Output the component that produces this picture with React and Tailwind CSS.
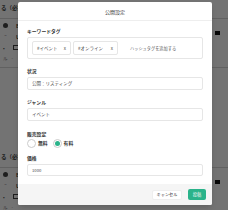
import React from "react";

function BgBlock() {
  return (
    <div className="h-[149px] flex flex-col text-[#444]">
      <div className="h-[19px] flex items-center pl-[1px] border-b border-[#d8d8d8] text-[5.5px] font-bold leading-none">
        る（必須）
      </div>
      <div className="flex">
        <div className="w-[30px] flex flex-col gap-[2px] pt-[2px] pl-[3px]">
          <div className="h-[9px] flex items-center gap-[8px] text-[5px] font-bold leading-none"><span className="w-[5px] h-[5px] rounded-full bg-[#444] inline-block" /><span>B</span></div>
          <div className="h-[9px] flex items-center gap-[8px] text-[5px] font-bold leading-none"><span>ˉ</span><span>U</span><span>S</span></div>
          <div className="h-[9px] flex items-center gap-[8px] text-[5px] leading-none"><span>•</span><span className="w-[6px] h-[5px] border border-[#444] inline-block" /></div>
          <div className="h-[9px] flex items-center gap-[4px] text-[4.5px] text-[#777] leading-none"><span>ル</span><span>-</span></div>
        </div>
        <div className="flex-1 flex justify-end pt-[12px] pr-[8px]">
          <span className="w-[5px] h-[4px] bg-[#111] inline-block" />
        </div>
      </div>
      <div className="border-b border-[#d8d8d8] mt-[4px]" />
    </div>
  );
}

export default function App() {
  return (
    <div className="relative w-[228px] h-[210px] overflow-hidden bg-white" style={{ fontFamily: '"Noto Sans CJK JP", "Noto Sans", sans-serif' }}>
      <div className="flex flex-col">
        <BgBlock />
        <BgBlock />
      </div>
      <div className="absolute inset-0 bg-black/55" />
      <div className="absolute left-[18px] top-[2px] w-[194px] h-[203px] bg-white rounded-[2px] flex flex-col shadow-md">
        <div className="h-[19px] shrink-0 flex items-center justify-center border-b border-[#eee] text-[5px] leading-none text-[#333]">
          公開設定
        </div>
        <div className="px-[9px] flex flex-col text-[#333]">
          <div className="mt-[8px] h-[5px] flex items-center text-[4.8px] leading-none font-bold">キーワードタグ</div>
          <div className="mt-[3px] h-[22px] border border-[#e6e6e6] rounded-[2px] flex items-center pl-[4px] gap-[2px]">
            <div className="h-[14px] w-[39px] border border-[#e6e6e6] rounded-[2px] flex items-center justify-between px-[4px] text-[4.5px] leading-none text-[#444]">
              <span>#イベント</span><span>x</span>
            </div>
            <div className="h-[14px] w-[45px] border border-[#e6e6e6] rounded-[2px] flex items-center justify-between px-[4px] text-[4.5px] leading-none text-[#444]">
              <span>#オンライン</span><span>x</span>
            </div>
            <span className="ml-[10px] text-[4.2px] leading-none text-[#555]">ハッシュタグを追加する</span>
          </div>
          <div className="mt-[9px] h-[6px] flex items-center text-[4.8px] leading-none font-bold">状況</div>
          <div className="mt-[3px] h-[13px] border border-[#e6e6e6] rounded-[2px] flex items-center pl-[4px] text-[4.5px] leading-none text-[#444]">公開：リスティング</div>
          <div className="mt-[9px] h-[6px] flex items-center text-[4.8px] leading-none font-bold">ジャンル</div>
          <div className="mt-[3px] h-[13px] border border-[#e6e6e6] rounded-[2px] flex items-center pl-[4px] text-[4.5px] leading-none text-[#444]">イベント</div>
          <div className="mt-[10px] h-[6px] flex items-center text-[4.8px] leading-none font-bold">販売設定</div>
          <div className="mt-[2px] h-[9px] flex items-center text-[4.8px] leading-none font-bold">
            <span className="w-[9px] h-[9px] rounded-full border border-[#ccc] inline-block" />
            <span className="ml-[2px]">無料</span>
            <span className="ml-[5px] w-[9px] h-[9px] rounded-full border border-[#ccc] flex items-center justify-center">
              <span className="w-[5px] h-[5px] rounded-full bg-[#2ab38a]" />
            </span>
            <span className="ml-[2px]">有料</span>
          </div>
          <div className="mt-[7px] h-[6px] flex items-center text-[4.8px] leading-none font-bold">価格</div>
          <div className="mt-[3px] h-[12px] border border-[#e6e6e6] rounded-[2px] flex items-center pl-[4px] text-[4.2px] leading-none text-[#444]">1000</div>
        </div>
        <div className="mt-auto h-[21px] bg-[#f5f5f5] flex items-center justify-end pr-[6px] gap-[6px] rounded-b-[2px]">
          <div className="w-[30px] h-[10px] bg-white border border-[#eee] rounded-[2px] flex items-center justify-center text-[4.2px] leading-none text-[#333]">キャンセル</div>
          <div className="w-[18px] h-[11px] bg-[#2ab38a] rounded-[2px] flex items-center justify-center text-[4.2px] leading-none text-white">投稿</div>
        </div>
      </div>
    </div>
  );
}
